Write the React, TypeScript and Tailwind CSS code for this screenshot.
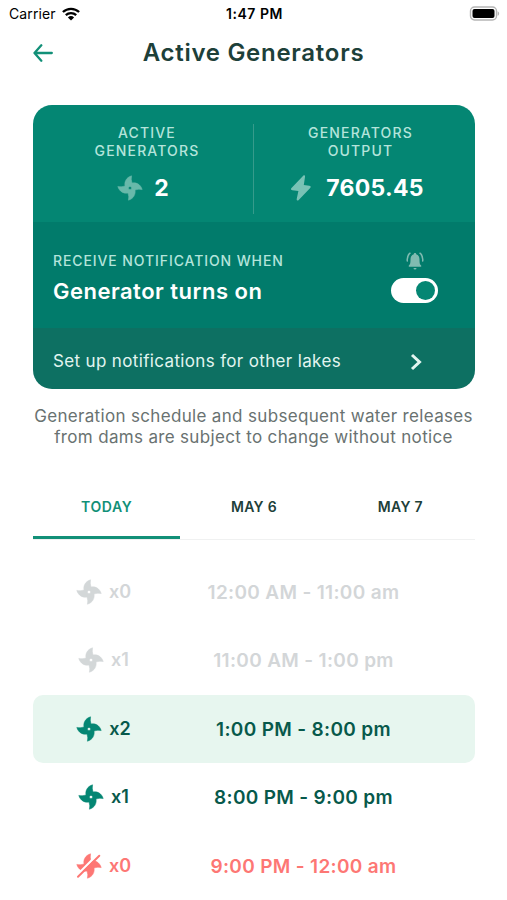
type Tone = "past" | "current" | "next" | "off";

const tones: Record<Tone, { row: string; icon: string; text: string }> = {
  past: { row: "", icon: "text-[#d3d7d8]", text: "text-[#d3d6d8]" },
  current: { row: "bg-[#e7f6ef]", icon: "text-[#048673]", text: "text-[#07594b]" },
  next: { row: "", icon: "text-[#048673]", text: "text-[#07594b]" },
  off: { row: "", icon: "text-[#fd7774]", text: "text-[#fd7774]" },
};

const slots: { count: string; time: string; tone: Tone }[] = [
  { count: "x0", time: "12:00 AM - 11:00 am", tone: "past" },
  { count: "x1", time: "11:00 AM - 1:00 pm", tone: "past" },
  { count: "x2", time: "1:00 PM - 8:00 pm", tone: "current" },
  { count: "x1", time: "8:00 PM - 9:00 pm", tone: "next" },
  { count: "x0", time: "9:00 PM - 12:00 am", tone: "off" },
];

/* Four-bladed turbine; the same blade is repeated at each quarter turn. */
function Fan({ off = false, className = "" }: { off?: boolean; className?: string }) {
  return (
    <svg viewBox="-13 -13 26 26" className={`h-[26px] w-[26px] shrink-0 ${className}`} fill="currentColor">
      <path
        fillRule="evenodd"
        stroke="currentColor"
        strokeWidth=".5"
        strokeLinejoin="round"
        d="M-5-2C-5.800-5.500-4.200-10.600 1.600-12.200Q.8-8.500 2-5C5.500-5.800 10.600-4.200 12.200 1.600Q8.500.8 5 2C5.800 5.500 4.200 10.600-1.600 12.200Q-.8 8.500-2 5C-5.500 5.800-10.600 4.200-12.200-1.600Q-8.500-.8-5-2ZM0-1.600A1.600 1.600 0 1 0 0 1.600 1.600 1.600 0 1 0 0-1.600Z"
      />
      {off && (
        <>
          <circle r="2.400" />
          <path d="M-13.500 10.600 9.500-12.400" stroke="#fff" strokeWidth="2.200" />
          <path d="M-11 10.800 10.300-10.200" stroke="currentColor" strokeWidth="2" strokeLinecap="round" />
        </>
      )}
    </svg>
  );
}

function StatusBar() {
  return (
    <div className="grid h-7 grid-cols-3 items-center pr-[7px] pl-[9px] text-[14px] text-black">
      <div className="flex items-center gap-[6px]">
        <span className="tracking-[0.1px]">Carrier</span>
        <svg viewBox="0 0 18 14" className="h-[14px] w-[18px]" fill="none" stroke="#000" strokeWidth="2.3">
          <path d="M.9 5A11.8 11.8 0 0 1 17.1 5" />
          <path d="M3.8 8.1a7.6 7.6 0 0 1 10.4 0" />
          <path d="M9 13.6 5.9 10.5a4.6 4.6 0 0 1 6.2 0Z" fill="#000" stroke="none" />
        </svg>
      </div>
      <span className="text-center font-semibold tracking-[0.5px]">1:47 PM</span>
      <svg viewBox="0 0 31 15" className="h-[15px] w-[31px] justify-self-end">
        <rect x="1.500" y="1" width="26" height="13" rx="4" fill="#fff" stroke="#b5b5b5" strokeWidth="1.4" />
        <rect x="3.500" y="3" width="22" height="9" rx="2" fill="#000" />
        <path d="M28.6 5.2c2 .8 2 3.8 0 4.6Z" fill="#b5b5b5" />
      </svg>
    </div>
  );
}

export default function App() {
  return (
    <main className="flex h-[900px] w-[507px] flex-col overflow-hidden bg-white font-['Inter',sans-serif]">
      <StatusBar />
      <header className="grid h-[50px] grid-cols-[1fr_auto_1fr] items-center px-[33px]">
        <svg viewBox="0 0 20 18" className="h-[18px] w-5" fill="none" stroke="#129078" strokeWidth="2.3" strokeLinecap="round" strokeLinejoin="round">
          <path d="M18.8 9H1.5M8.3 1.3 1.5 9l6.8 7.7" />
        </svg>
        <h1 className="text-[24px] font-semibold tracking-[0.72px] text-[#1d4039]">Active Generators</h1>
      </header>

      <section className="mx-[33px] mt-[27px] w-[442px] shrink-0 overflow-hidden rounded-[19px] text-white">
        <div className="grid h-[117px] grid-cols-[220px_1px_1fr] bg-[#048673] pt-[19px] text-center">
          <div className="pl-2">
            <p className="text-[14px] leading-[18px] font-medium tracking-[1.15px] text-[#b4e4db]">ACTIVE<br />GENERATORS</p>
            <div className="mt-[12px] flex h-[32px] items-center justify-center gap-[11px] pr-[8px]">
              <Fan className="text-[#68b9aa]" />
              <span className="pt-[2px] text-[23px] font-bold">2</span>
            </div>
          </div>
          <div className="h-[90px] bg-[#369b8b]" />
          <div className="pr-[8px]">
            <p className="text-[14px] leading-[18px] font-medium tracking-[1.15px] text-[#b4e4db]">GENERATORS<br />OUTPUT</p>
            <div className="mt-[12px] flex h-[32px] items-center justify-center gap-[14px] pr-[7px]">
              <svg viewBox="0 0 22 26" className="h-[26px] w-[22px]" fill="#79c2b5">
                <path d="M13.2.8 1.500 13c-1 1.100-.5 2 .8 2.200l6.100.8-1.700 8c-.3 1.600 1 2 2 .9L20.200 13c1-1.100.6-2-.8-2.200l-5.600-.8 1.200-8c.3-1.600-.8-2.200-1.800-1.200Z" />
              </svg>
              <span className="pt-[2px] text-[23px] font-bold tracking-[0.3px]">7605.45</span>
            </div>
          </div>
        </div>
        <div className="flex h-[106px] items-start justify-between bg-[#017b6b] pr-[37px] pl-5">
          <div className="pt-[30px]">
            <p className="text-[14px] leading-[18px] font-medium tracking-[0.9px] text-[#b4e4db]">RECEIVE NOTIFICATION WHEN</p>
            <p className="mt-[5px] text-[22px] leading-8 font-semibold tracking-[0.5px]">Generator turns on</p>
          </div>
          <div className="flex flex-col items-center pt-[30px]">
            <svg viewBox="0 0 18 19" className="h-[19px] w-[18px]" fill="#80bbb1">
              <path d="M9 1c.8 0 1.200.5 1.200 1.200C12.600 2.900 13.500 5 13.500 7.500c0 4 .5 5 1.700 6v1.300H2.800v-1.300c1.200-1 1.700-2 1.700-6 0-2.500.9-4.600 3.300-5.300C7.800 1.500 8.200 1 9 1ZM7.500 16h3a1.500 1.500 0 0 1-3 0Z" />
              <path d="M4 1.200C1.800 3 .9 5.500 1.300 9M14 1.200c2.200 1.800 3.100 4.300 2.700 7.800" fill="none" stroke="#80bbb1" strokeWidth="1.500" strokeLinecap="round" />
            </svg>
            <div className="mt-[7px] flex h-[25px] w-[47px] items-center justify-end rounded-full bg-white pr-[3px]">
              <div className="size-[19px] rounded-full bg-[#048673]" />
            </div>
          </div>
        </div>
        <div className="flex h-[61px] items-center justify-between bg-[#0d7062] pt-[8px] pr-[53px] pl-5 text-[#e2f5f0]">
          <span className="text-[17px] tracking-[0.35px]">Set up notifications for other lakes</span>
          <svg viewBox="0 0 12 18" className="h-[18px] w-3" fill="none" stroke="#e2f5f0" strokeWidth="3">
            <path d="m2 2 7.500 7L2 16" />
          </svg>
        </div>
      </section>

      <p className="mt-[17px] text-center text-[17px] leading-[21px] tracking-[0.33px] whitespace-nowrap text-[#697271]">
        Generation schedule and subsequent water releases<br />from dams are subject to change without notice
      </p>

      <nav className="mx-[33px] mt-[28px] grid h-[64px] w-[442px] shrink-0 grid-cols-3 border-b border-[#f0f1f1] text-center text-[14px] leading-[62px] font-semibold text-[#1d4039]">
        <span className="h-[63px] border-b-[3px] border-[#129078] tracking-[0.6px] text-[#129078]">TODAY</span>
        <span className="tracking-[0.3px]">MAY 6</span>
        <span className="pr-[2px] tracking-[0.3px]">MAY 7</span>
      </nav>

      <ul className="mx-[33px] mt-[18px] w-[442px]">
        {slots.map((slot) => (
          <li key={slot.time} className={`grid h-[68.5px] grid-cols-[141px_1fr] items-center rounded-[10px] ${tones[slot.tone].row}`}>
            <div className={`flex items-center justify-center gap-[7px] ${tones[slot.tone].icon}`}>
              <Fan off={slot.tone === "off"} />
              <span className={`pb-px text-[18px] font-semibold ${tones[slot.tone].text}`}>{slot.count}</span>
            </div>
            <span className={`pt-[2px] pr-[42px] text-center text-[19px] font-semibold tracking-[0.33px] whitespace-nowrap ${tones[slot.tone].text}`}>{slot.time}</span>
          </li>
        ))}
      </ul>
    </main>
  );
}
